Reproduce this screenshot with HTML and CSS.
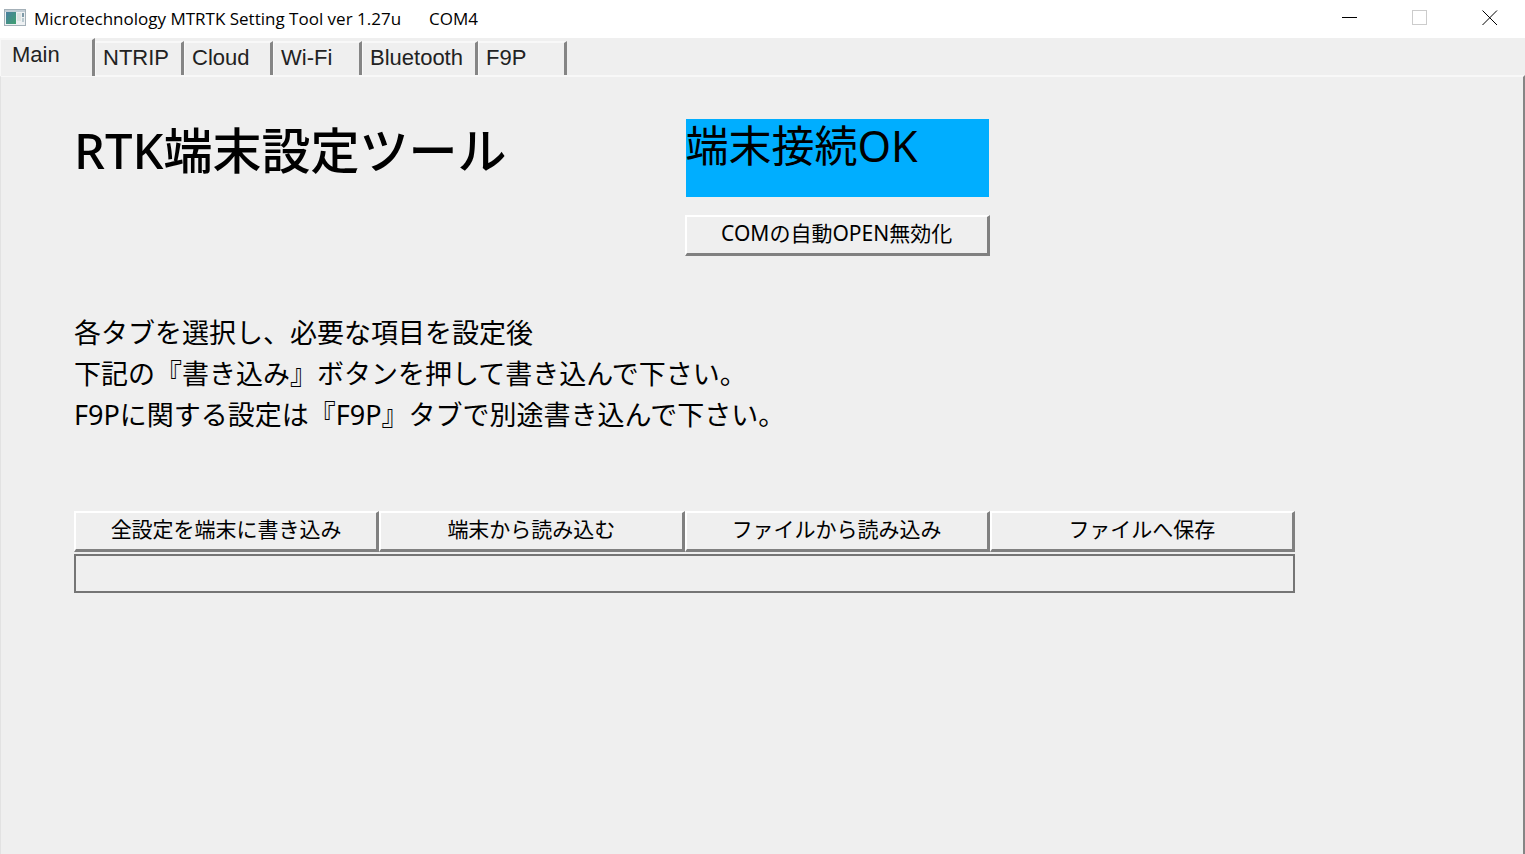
FILE: index.html
```html
<!DOCTYPE html>
<html lang="ja">
<head>
    <meta charset="UTF-8">
    <meta name="viewport" content="width=device-width, initial-scale=1.0">
    <title>Microtechnology MTRTK Setting Tool</title>
    <link rel="stylesheet" href="styles.css">
</head>
<body>
    <!-- Title bar -->
    <header class="titlebar">
        <svg class="app-icon" width="22" height="18" viewBox="0 0 22 18">
            <defs>
                <linearGradient id="screen" x1="0" y1="0" x2="1" y2="1">
                    <stop offset="0" stop-color="#4a7fa0"/>
                    <stop offset="1" stop-color="#3fa070"/>
                </linearGradient>
            </defs>
            <rect x="0.5" y="0.5" width="21" height="16" fill="#eef1f3" stroke="#a4b0b8"/>
            <rect x="1" y="1" width="20" height="2" fill="#c3ced6"/>
            <rect x="2" y="3" width="10" height="12" fill="url(#screen)"/>
            <rect x="13" y="4" width="4" height="8" fill="#dde3e2"/>
            <rect x="18" y="4" width="2" height="4" fill="#7f9aa8"/>
            <rect x="18" y="9" width="2" height="4" fill="#b9c9cf"/>
        </svg>
        <span class="window-title">Microtechnology MTRTK Setting Tool ver 1.27u</span>
        <span class="port">COM4</span>
        <div class="window-buttons">
            <button class="window-btn" aria-label="最小化">
                <svg width="16" height="16" viewBox="0 0 16 16"><path d="M0 7.5H15" stroke="#000"/></svg>
            </button>
            <button class="window-btn" aria-label="最大化" disabled>
                <svg width="16" height="16" viewBox="0 0 16 16"><rect x="0.5" y="0.5" width="14" height="14" fill="none" stroke="#ccc"/></svg>
            </button>
            <button class="window-btn" aria-label="閉じる">
                <svg width="16" height="16" viewBox="0 0 16 16"><path d="M0.5 0.5L15 15M15 0.5L0.5 15" stroke="#000"/></svg>
            </button>
        </div>
    </header>

    <!-- Tabs -->
    <nav class="tabs" role="tablist">
        <button class="tab active" role="tab" aria-selected="true">Main</button>
        <button class="tab" role="tab">NTRIP</button>
        <button class="tab" role="tab">Cloud</button>
        <button class="tab" role="tab">Wi-Fi</button>
        <button class="tab" role="tab">Bluetooth</button>
        <button class="tab" role="tab">F9P</button>
    </nav>

    <!-- Main tab -->
    <main class="panel" role="tabpanel">
        <div class="content">
            <h1>RTK端末設定ツール</h1>
            <div class="connection">
                <div class="status">端末接続OK</div>
                <button class="btn">COMの自動OPEN無効化</button>
            </div>

            <p class="guide">
                各タブを選択し、必要な項目を設定後<br>
                下記の『書き込み』ボタンを押して書き込んで下さい。<br>
                F9Pに関する設定は『F9P』タブで別途書き込んで下さい。
            </p>

            <button class="btn">全設定を端末に書き込み</button>
            <button class="btn">端末から読み込む</button>
            <button class="btn">ファイルから読み込み</button>
            <button class="btn">ファイルへ保存</button>

            <progress class="progress" value="0" max="100" aria-label="進捗"></progress>
        </div>
    </main>
</body>
</html>
```

FILE: styles.css
```css
/* Global styles */
* {
    box-sizing: border-box;
}

body {
    display: flex;
    flex-direction: column;
    min-height: 100vh;
    margin: 0;
    background-color: #efefef;
    color: #000;
    font-family: "Noto Sans", "Noto Sans CJK JP", sans-serif;
}

button {
    font-family: inherit;
    color: inherit;
}

/* Title bar */
.titlebar {
    display: flex;
    align-items: center;
    height: 38px;
    padding: 0 0 2px 4px;
    background-color: #fff;
    font-family: "Open Sans", sans-serif;
    font-size: 17px;
}

.app-icon {
    margin-right: 8px;
}

.port {
    margin-left: 28px;
}

.window-buttons {
    display: flex;
    margin-left: auto;
}

.window-btn {
    display: flex;
    align-items: center;
    justify-content: center;
    width: 70px;
    height: 36px;
    padding: 0;
    border: none;
    background: none;
}

/* Tabs */
.tabs {
    display: flex;
    align-items: flex-end;
    height: 38px;
}

.tab {
    min-width: 89px;
    height: 35px;
    padding: 0 12px 4px 7px;
    border: solid;
    border-width: 2px 3px 0 1px;
    border-color: #f8f8f8 #858585 #f8f8f8 #f8f8f8;
    background-color: #efefef;
    font-family: "Liberation Sans", Arial, sans-serif;
    font-size: 22px;
    line-height: 28px;
    text-align: left;
    color: #222;
}

.tab.active {
    z-index: 1;
    min-width: 95px;
    height: 38px;
    padding: 0 11px 6px;
}

/* Panel */
.panel {
    flex: 1;
    margin-top: -1px;
    padding: 42px 0 0 73px;
    border: solid;
    border-width: 2px 2px 0 1px;
    border-color: #f8f8f8 #858585 #f8f8f8 #e2e2e2;
}

.content {
    display: grid;
    grid-template-columns: repeat(4, 1fr);
    max-width: 1221px;
}

h1 {
    grid-column: span 2;
    margin: 0;
    font-size: 49px;
    font-weight: 500;
    line-height: 62px;
}

.status {
    height: 78px;
    margin: 0 1px 18px;
    background-color: #00aeff;
    font-size: 43px;
    line-height: 54px;
}

.guide {
    grid-column: 1 / -1;
    margin: 56px 0 76px;
    font-size: 27px;
    line-height: 41px;
}

/* Buttons */
.btn {
    width: 100%;
    height: 41px;
    padding: 0 0 4px;
    border: solid;
    border-width: 2px 3px 3px 2px;
    border-color: #fff #808080 #808080 #fff;
    background-color: #efefef;
    font-size: 21px;
    line-height: 30px;
}

/* Progress bar */
.progress {
    grid-column: 1 / -1;
    width: 100%;
    height: 39px;
    margin-top: 2px;
    border: 2px solid #757575;
    background: none;
    appearance: none;
}

.progress::-webkit-progress-bar {
    background: none;
}
```
